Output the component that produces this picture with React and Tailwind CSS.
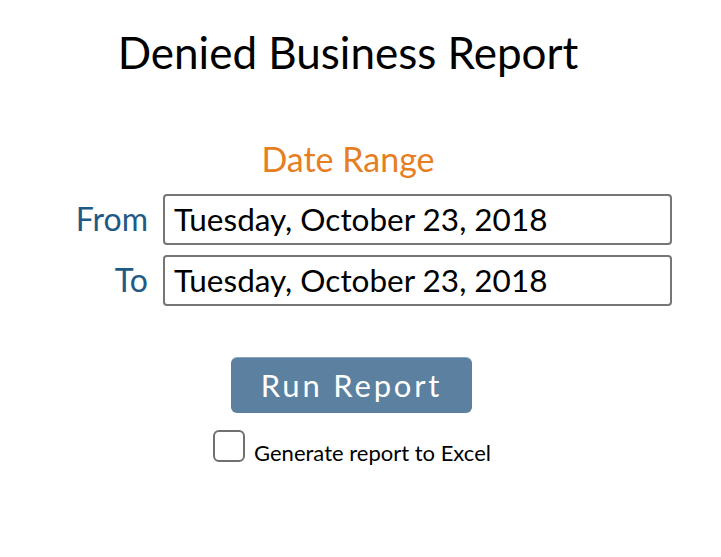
import React, { useState } from "react";

export default function App() {
  const [from, setFrom] = useState("Tuesday, October 23, 2018");
  const [to, setTo] = useState("Tuesday, October 23, 2018");
  const [excel, setExcel] = useState(false);

  return (
    <div className="min-h-screen w-[721px] bg-white font-['Lato','Open_Sans',sans-serif]">
      <div className="w-[700px] flex flex-col items-center pt-[26px]">
        <h1 className="ml-[-4px] text-[44px] leading-[1.2] text-black">Denied Business Report</h1>

        <h2 className="mt-[60px] ml-[-4px] text-[34px] leading-[1.2] text-[#e67e22]">Date Range</h2>

        <div className="self-start mt-[14px] grid grid-cols-[148px_509px] gap-x-[15px] gap-y-[10px] items-center">
          <label className="text-right text-[32px] leading-[1.2] text-[#1f5a87]">From</label>
          <input
            readOnly
            value={from}
            onChange={(e) => setFrom(e.target.value)}
            className="h-[51px] w-full border-2 border-[#767676] rounded-[4px] px-[9px] text-[31.5px] text-black outline-none"
          />
          <label className="text-right text-[32px] leading-[1.2] text-[#1f5a87]">To</label>
          <input
            readOnly
            value={to}
            onChange={(e) => setTo(e.target.value)}
            className="h-[51px] w-full border-2 border-[#767676] rounded-[4px] px-[9px] text-[31.5px] text-black outline-none"
          />
        </div>

        <button className="mt-[52px] ml-[3px] w-[241px] h-[55px] rounded-[6px] bg-[#5b80a0] text-white text-[31px] tracking-[2.8px] shadow-[0_-1px_0_#8aa6bf]">
          Run Report
        </button>

        <label className="mt-[17px] ml-[4px] flex items-end gap-[9px] cursor-pointer">
          <input
            type="checkbox"
            checked={excel}
            onChange={(e) => setExcel(e.target.checked)}
            className="appearance-none w-[32px] h-[32px] border-2 border-[#707070] rounded-[6px] bg-white"
          />
          <span className="text-[22px] leading-none mb-[-2px] text-black">Generate report to Excel</span>
        </label>
      </div>
    </div>
  );
}
